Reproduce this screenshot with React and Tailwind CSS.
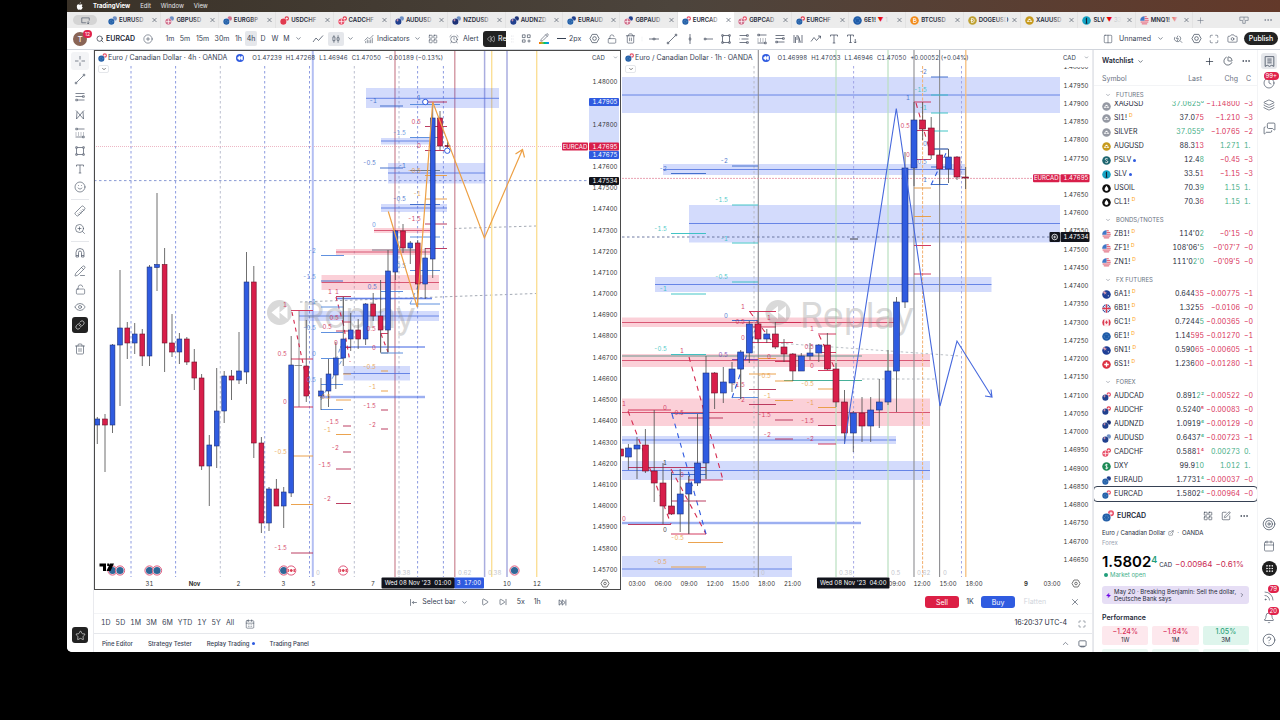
import React from 'react';
import {
  Search, CirclePlus, ChevronDown, ChevronUp, ChevronRight, LayoutGrid, AlarmClock, Pencil,
  LockOpen, Trash2, Smile, Ruler, ZoomIn, Magnet, PencilLine, Eye, Link, Star, Plus, ChartPie,
  Ellipsis, Layers, MessagesSquare, Target, Calendar, Grip, Rss, Bell, CircleHelp, Clock, Columns2,
  Maximize, Camera, Play, StepForward, SkipForward, X, CalendarDays, SquarePen, ExternalLink,
  Rewind, Zap, ChartNoAxesCombined, LayoutTemplate,
} from 'lucide-react';

const BLUE = '#2f5be0';
const RED = '#d81e4a';

/* ---------- flags ---------- */
const FLAG = {
  EUR: '#2560a8', USD: '#6d8fc4', GBP: '#d0708c', CHF: '#e03a4e', CAD: '#e8506a', AUD: '#21408e', NZD: '#1d3277',
};

function Pair({ a, b, className = 'size-[10px]' }) {
  return (
    <svg viewBox="0 0 20 20" className={`${className} shrink-0`} aria-hidden="true">
      <circle cx="15" cy="5.500" r="5" fill={FLAG[b]} />
      {(b === 'CAD' || b === 'CHF') && <path d="M15 3v5M12.500 5.500h5" stroke="#fff" strokeWidth="1.800" />}
      <circle cx="7.500" cy="12.500" r="7.500" fill="#fff" />
      <circle cx="7.500" cy="12.500" r="6.800" fill={FLAG[a]} />
      {(a === 'CAD' || a === 'USD' || a === 'GBP') && <path d="M2 12.500h11M7.500 7v11" stroke="#fff" strokeWidth="1.600" />}
      {(a === 'AUD' || a === 'NZD') && <path d="M3 9h5M5.500 7v5" stroke="#f3a6b4" strokeWidth="1.500" />}
      {a === 'EUR' && <circle cx="7.500" cy="12.500" r="3.200" fill="none" stroke="#86b6dc" strokeWidth="1.200" strokeDasharray="1.2 1.6" />}
    </svg>
  );
}

function Badge({ kind }) {
  const base = { viewBox: '0 0 20 20', className: 'size-[9px] shrink-0', 'aria-hidden': true };
  switch (kind) {
    case 'silver':
    case 'gold':
      return (
        <svg {...base}>
          <circle cx="10" cy="10" r="9.500" fill={kind === 'gold' ? '#c79a1c' : '#9599a3'} />
          <path d="M4 13l1.500-3h3L10 13zM10 13l1.500-3h3L16 13zM7 9l1.500-3h3L13 9z" fill="#fff" />
        </svg>
      );
    case 'pslv':
      return <svg {...base}><circle cx="10" cy="10" r="9.500" fill="#1f6670" /><path d="M13 7c-1-2-6-2-6 0s6 3 6 6-5 2-6 0" stroke="#fff" strokeWidth="1.800" fill="none" /></svg>;
    case 'slv':
      return <svg {...base}><circle cx="10" cy="10" r="9.500" fill="#15a3c4" /><path d="M10 4v12M8 16h4M8.500 8H10" stroke="#123" strokeWidth="2.400" /></svg>;
    case 'oil':
      return <svg {...base}><circle cx="10" cy="10" r="9.500" fill="#111" /><path d="M10 4c3 4 4 5.500 4 7.500a4 4 0 0 1-8 0C6 9.500 7 8 10 4z" fill="#fff" /></svg>;
    case 'us':
      return <svg {...base}><circle cx="10" cy="10" r="9.500" fill="#f4e6ea" /><path d="M10 1.500h5M10 5.500h8.500M10 9.500h9.500M1.500 13.500h17M4 17.500h12" stroke="#e2566c" strokeWidth="2" /><path d="M10 .5A9.500 9.500 0 0 0 .5 10.500H10z" fill="#3f78c8" /></svg>;
    case 'au':
    case 'nz':
      return <svg {...base}><circle cx="10" cy="10" r="9.500" fill="#1f3f96" /><path d="M2 6h8M6 2v8M2.500 3l7 6" stroke="#f2aab5" strokeWidth="1.600" /><circle cx="14" cy="13" r="1.300" fill="#fff" /></svg>;
    case 'gb':
      return <svg {...base}><circle cx="10" cy="10" r="9.500" fill="#3b5aa5" /><path d="M3 3l14 14M17 3L3 17" stroke="#fff" strokeWidth="2" /><path d="M10 .5v19M.5 10h19" stroke="#fff" strokeWidth="5" /><path d="M10 .5v19M.5 10h19" stroke="#dc3a50" strokeWidth="2.800" /></svg>;
    case 'ca':
      return <svg {...base}><circle cx="10" cy="10" r="9.500" fill="#fdeef0" /><path d="M5 2a9.500 9.500 0 0 0 0 16zM15 2a9.500 9.500 0 0 1 0 16z" fill="#dc3a50" /><path d="M10 5l3 5-3 4-3-4z" fill="#dc3a50" /></svg>;
    case 'eu':
      return <svg {...base}><circle cx="10" cy="10" r="9.500" fill="#1f5ba8" /><circle cx="10" cy="10" r="5" fill="none" stroke="#6fa6d8" strokeWidth="1.600" strokeDasharray="1.600 1.800" /></svg>;
    case 'ch':
      return <svg {...base}><circle cx="10" cy="10" r="9.500" fill="#dd3142" /><path d="M10 5v10M5 10h10" stroke="#fff" strokeWidth="3" /></svg>;
    case 'dxy':
      return <svg {...base}><circle cx="10" cy="10" r="9.500" fill="#1c8a55" /><path d="M13 7c-1-2-6-2-6 0s6 3 6 6-5 2-6 0M10 4v12" stroke="#fff" strokeWidth="1.600" fill="none" /></svg>;
    case 'btc':
      return <svg {...base}><circle cx="10" cy="10" r="9.500" fill="#f28c1c" /><path d="M7.500 5v10M7.500 5.500h3.500a2 2 0 0 1 0 4H7.500h4a2.500 2.500 0 0 1 0 5h-4" stroke="#fff" strokeWidth="1.700" fill="none" /></svg>;
    case 'doge':
      return <svg {...base}><circle cx="10" cy="10" r="9.500" fill="#bfa132" /><path d="M8 5v10M8 5.500h1.500a4.500 4.500 0 0 1 0 9H8M6 10h5" stroke="#fff" strokeWidth="1.700" fill="none" /></svg>;
    default:
      return null;
  }
}

/* ---------- drawing-tool glyphs ---------- */
const GLYPH = {
  cross: 'M12 2v7M12 15v7M2 12h7M15 12h7',
  trend: 'M5.500 18.500L18.500 5.500M2.500 18.500h3v3h-3zM18.500 2.500h3v3h-3z',
  fib: 'M3 5h14M7 12h14M3 12h1M3 19h14M17 3.500h3.500v3H17zM17 17.500h3.500v3H17z',
  fibExt: 'M3 5h18M3 11h14M7 18h14M17 9.500h3.500v3H17zM3.500 16.500H7v3H3.500z',
  pattern: 'M5 20L6 5l6 7 6-7 1 15-7-8zM6 5l-2-2M18 5l2-2',
  forecast: 'M7 4h14M3.500 2.500H7v3H3.500zM3 20h14M17 18.500h3.500v3H17zM3 12h2M8 12h2M13 12h2M18 12h2M3 16h2M8 16h2M13 16h2M18 16h2',
  rect: 'M6.500 5h11M6.500 19h11M5 6.500v11M19 6.500v11M3.500 3.500h3v3h-3zM17.500 3.500h3v3h-3zM3.500 17.500h3v3h-3zM17.500 17.500h3v3h-3z',
  hline: 'M2 12h8M14 12h8M10 10.500h4v3h-4z',
  vline: 'M12 2v8M12 14v8M10.500 10h3v4h-3z',
  hray: 'M8 12h14M4.500 10.500H8v3H4.500z',
  bars: 'M4 4v16M7 8v12M12 5l5 14M10 4v10M14 9v11M20 4v16',
  zigzag: 'M2 17l6-8 5 6 8-9M16 6h5v5',
  text: 'M5 7V4h14v3M12 4v16M9.500 20h5',
  textPin: 'M3 7V4h12v3M9 4v15M6.500 19h5M18.500 12v8M16 17.500l2.500 2.500 2.500-2.500',
  line: 'M2 18l6-8 5 5 9-10',
  candles: 'M7 3v4M7 16v5M4.500 7h5v9h-5zM17 3v6M17 15v6M14.500 9h5v6h-5z',
  handle: 'M10 5h1M14 5h1M10 12h1M14 12h1M10 19h1M14 19h1',
  gridPlus: 'M3 4h6v6H3zM14 4h6v6h-6zM3 15h6v5H3zM14 17.500h7M17.500 14v7',
  searchBolt: 'M4.500 7a7.500 7.500 0 1 0 11-2M17 16l5 5M12 4l-4 7h5l-3 6',
};

function Glyph({ name, className = 'size-[12px]' }) {
  return (
    <svg viewBox="0 0 24 24" className={className} fill="none" stroke="currentColor" strokeWidth="1.400" aria-hidden="true">
      <path d={GLYPH[name]} />
    </svg>
  );
}

function IconButton({ label, className = '', children }) {
  return (
    <button type="button" aria-label={label} className={`flex shrink-0 items-center justify-center ${className}`}>
      {children}
    </button>
  );
}

/* ---------- top bars ---------- */
function MenuBar() {
  return (
    <div className="flex h-3 items-center bg-linear-to-r from-[#3a3228] via-[#4c443c] to-[#63392a] pl-[9px] text-[6px] leading-3 text-gray-200">
      <svg viewBox="0 0 20 24" className="h-[8px] w-[8px]" aria-hidden="true">
        <path d="M13 1c0 2-2 4.500-4 4.500C9 3 11 1.200 13 1zM17.500 17c-1 3-3 6-5 6-1.500 0-2-.8-3.500-.8S7 23 5.500 23C3 23 .5 18 .5 13.500.5 9.500 3 7 5.500 7c1.500 0 2.500 1 4 1s2.500-1.200 4.500-1.200c1.300 0 2.800.8 3.700 2-3.200 2-2.700 6.500 0.800 7.800z" fill="#fff" />
      </svg>
      <span className="ml-[9px] font-bold text-white">TradingView</span>
      <span className="ml-[10px]">Edit</span>
      <span className="ml-[10px]">Window</span>
      <span className="ml-[10px]">View</span>
    </div>
  );
}

const TABS = [
  ['EURUSD', 'EUR', 'USD'], ['GBPUSD', 'GBP', 'USD'], ['EURGBP', 'EUR', 'GBP'], ['USDCHF', 'CHF', 'CHF'],
  ['CADCHF', 'CAD', 'CHF'], ['AUDUSD', 'AUD', 'USD'], ['NZDUSD', 'NZD', 'USD'], ['AUDNZD', 'AUD', 'NZD'],
  ['EURAUD', 'EUR', 'AUD'], ['GBPAUD', 'GBP', 'AUD'], ['EURCAD', 'EUR', 'CAD'], ['GBPCAD', 'GBP', 'CAD'],
  ['EURCHF', 'EUR', 'CHF'], ['6E1!', 'eu', null, '1'], ['BTCUSD', 'btc'], ['DOGEUSD', 'doge'],
  ['XAUUSD', 'gold'], ['SLV', 'slv', null, '33'], ['MNQ1!', 'us', null, ''],
];

function TabBar() {
  return (
    <div className="flex h-4 items-stretch bg-[#ececec]">
      <div className="flex w-[37px] shrink-0 items-center pl-[6px]">
        <IconButton label="Windows" className="h-[10px] w-[24px] rounded-full bg-[#d4d4d4] text-gray-600">
          <svg viewBox="0 0 24 24" className="size-[9px]" fill="none" stroke="currentColor" strokeWidth="1.800" aria-hidden="true">
            <path d="M13 18H2V5h20v7M19 14v7M16 18l3 3 3-3" />
          </svg>
        </IconButton>
      </div>
      <div className="flex min-w-0 flex-1">
        {TABS.map(([name, a, b, extra]) => {
          const active = name === 'EURCAD';
          return (
            <div
              key={name}
              className={`flex min-w-0 flex-1 items-center gap-[2px] pl-[4px] pr-[2px] ${active ? 'bg-white' : 'border-r border-[#e2e2e2]'}`}
            >
              {b ? <Pair a={a} b={b} className="size-[9px]" /> : <Badge kind={a} />}
              <div className="relative min-w-0 flex-1 whitespace-nowrap text-[6px] font-semibold leading-4 text-gray-800">
                {name}
                {extra !== undefined && <span className="font-normal text-gray-400"><span className="text-red-600"> ▼</span> {extra}</span>}
                <span className={`absolute inset-y-0 right-[2px] w-[12px] bg-linear-to-r from-transparent ${active ? 'to-white' : 'to-[#ececec]'}`} />
              </div>
              <IconButton label={`Close ${name}`} className="size-[7px] text-gray-700"><X className="size-[8px]" strokeWidth={2} /></IconButton>
            </div>
          );
        })}
      </div>
      <div className="flex w-[87px] shrink-0 items-center justify-between pl-[3px] pr-[7px] text-gray-500">
        <IconButton label="New tab" className="size-[9px]"><Plus className="size-[9px]" strokeWidth={1.5} /></IconButton>
        <div className="flex gap-[14px]">
          <IconButton label="Arrange" className="size-[10px]">
            <svg viewBox="0 0 24 20" className="h-[10px] w-[12px]" fill="none" stroke="currentColor" strokeWidth="1.600" aria-hidden="true"><path d="M2 3h20v8h-7v7H9v-7H2zM12 3v8" /></svg>
          </IconButton>
          <IconButton label="More" className="size-[10px]"><Ellipsis className="size-[10px]" strokeWidth={1.5} /></IconButton>
        </div>
      </div>
    </div>
  );
}

const INTERVALS = [
  ['1m', 'w-[14px]'], ['5m', 'w-[16px]'], ['15m', 'w-[19px]'], ['30m', 'w-[20px]'], ['1h', 'w-[13px]'],
  ['4h', 'w-[12px] rounded-[2px] bg-gray-200'], ['D', 'w-[12px]'], ['W', 'w-[12px]'], ['M', 'w-[11px]'],
];
const DRAW = [
  ['hline', 'Horizontal line'], ['trend', 'Trend line'], ['vline', 'Vertical line'], ['hray', 'Horizontal ray'],
  ['rect', 'Rectangle'], ['fib', 'Fib retracement'], ['forecast', 'Long position'], ['fibExt', 'Fib extension'],
  ['bars', 'Bars pattern'], ['zigzag', 'Path'], ['text', 'Text'], ['textPin', 'Anchored text'],
];

function Toolbar() {
  return (
    <div className="flex h-[21px] items-center bg-white text-[7px] leading-none text-gray-700">
      <div className="relative ml-[6px] flex size-[14px] shrink-0 items-center justify-center rounded-full bg-[#8a6556] text-[8px] text-white">
        T
        <span className="absolute -right-[5px] -top-[2px] rounded-full bg-[#e0224b] px-[2px] text-[5px] leading-[8px]">12</span>
      </div>
      <button type="button" className="ml-[9px] flex w-[44px] shrink-0 items-center gap-[2px] font-semibold text-gray-800">
        <Search className="size-[8px]" strokeWidth={2} />EURCAD
      </button>
      <IconButton label="Compare" className="w-[16px]"><CirclePlus className="size-[10px]" strokeWidth={1.3} /></IconButton>
      <div className="ml-[7px] flex shrink-0">
        {INTERVALS.map(([t, c]) => (
          <button key={t} type="button" className={`h-[15px] shrink-0 text-center ${c}`}>{t}</button>
        ))}
      </div>
      <IconButton label="More intervals" className="w-[12px]"><ChevronDown className="size-[7px]" /></IconButton>
      <IconButton label="Line chart" className="ml-[6px] w-[16px]"><Glyph name="line" /></IconButton>
      <IconButton label="Candles" className="ml-[2px] h-[14px] w-[16px] rounded-[2px] bg-gray-200"><Glyph name="candles" className="size-[10px]" /></IconButton>
      <IconButton label="Chart styles" className="w-[13px]"><ChevronDown className="size-[7px]" /></IconButton>
      <button type="button" className="ml-[7px] flex w-[48px] shrink-0 items-center gap-[3px]">
        <ChartNoAxesCombined className="size-[10px] shrink-0" strokeWidth={1.3} />Indicators
      </button>
      <IconButton label="Favorite indicators" className="w-[10px]"><ChevronDown className="size-[7px]" /></IconButton>
      <IconButton label="Templates" className="ml-[5px] w-[12px]"><LayoutGrid className="size-[10px]" strokeWidth={1.3} /></IconButton>
      <button type="button" className="ml-[10px] flex w-[34px] shrink-0 items-center gap-[4px]">
        <AlarmClock className="size-[10px] shrink-0" strokeWidth={1.3} />Alert
      </button>
      <button type="button" aria-label="Replay" className="flex h-[16px] w-[23px] shrink-0 items-center gap-[3px] rounded-l-[3px] bg-[#222] pl-[4px] text-white">
        <Rewind className="size-[8px] shrink-0" strokeWidth={1.5} />Re
      </button>
      <div className="flex shrink-0 items-center">
        <span className="flex w-[11px] justify-center text-gray-400"><Glyph name="handle" className="size-[10px]" /></span>
        <IconButton label="Drawing templates" className="w-[18px]"><Glyph name="gridPlus" className="size-[11px]" /></IconButton>
        <IconButton label="Line color" className="w-[18px] flex-col">
          <Pencil className="size-[9px]" strokeWidth={1.5} />
          <span className="h-[2px] w-[10px] bg-linear-to-r from-orange-500 via-green-500 to-blue-500" />
        </IconButton>
        <button type="button" className="flex w-[32px] items-center gap-[3px] pl-[4px]">
          <span className="h-px w-[9px] bg-gray-700" />2px
        </button>
        <IconButton label="Settings" className="w-[18px]"><SettingsHex /></IconButton>
        <IconButton label="Lock" className="w-[18px]"><LockOpen className="size-[10px]" strokeWidth={1.3} /></IconButton>
        <IconButton label="Remove" className="w-[18px]"><Trash2 className="size-[11px]" strokeWidth={1.3} /></IconButton>
        <span className="flex w-[6px] justify-center text-gray-400"><Glyph name="handle" className="size-[10px]" /></span>
        {DRAW.map(([g, label]) => (
          <IconButton key={label} label={label} className="w-[18px]"><Glyph name={g} /></IconButton>
        ))}
      </div>
      <div className="ml-auto flex shrink-0 items-center pr-[2px]">
        <button type="button" className="flex items-center gap-[6px]">
          <Columns2 className="size-[10px]" strokeWidth={1.3} />Unnamed
        </button>
        <IconButton label="Layouts" className="w-[18px]"><ChevronDown className="size-[7px]" /></IconButton>
        <IconButton label="Quick search" className="w-[18px]"><Glyph name="searchBolt" className="size-[10px]" /></IconButton>
        <IconButton label="Chart settings" className="w-[18px]"><SettingsHex /></IconButton>
        <IconButton label="Fullscreen" className="w-[18px]"><Maximize className="size-[10px]" strokeWidth={1.3} /></IconButton>
        <IconButton label="Snapshot" className="w-[19px]"><Camera className="size-[11px]" strokeWidth={1.3} /></IconButton>
        <button type="button" className="ml-[2px] h-[13px] w-[34px] rounded-full bg-[#222] text-center font-medium text-white">Publish</button>
      </div>
    </div>
  );
}

function SettingsHex() {
  return (
    <svg viewBox="0 0 24 24" className="size-[11px]" fill="none" stroke="currentColor" strokeWidth="1.500" aria-hidden="true">
      <path d="M7 3h10l5 9-5 9H7l-5-9z" strokeLinejoin="round" /><circle cx="12" cy="12" r="4" />
    </svg>
  );
}

const TOOLS_A = [['cross', 'Cross'], ['trend', 'Trend line'], ['fibExt', 'Fib'], ['pattern', 'Patterns'], ['forecast', 'Forecasting'], ['rect', 'Shapes'], ['text', 'Text']];

function LeftTools() {
  const cell = 'h-[18px] w-[18px]';
  const ic = 'size-[12px]';
  return (
    <div className="flex w-[26px] shrink-0 flex-col items-center bg-white pt-[2px] text-gray-600">
      {TOOLS_A.map(([g, label], i) => (
        <IconButton key={label} label={label} className={`${cell} ${i === 0 ? 'rounded-[3px] bg-gray-100' : ''}`}><Glyph name={g} /></IconButton>
      ))}
      <IconButton label="Icons" className={cell}><Smile className={ic} strokeWidth={1.3} /></IconButton>
      <span className="my-[2px] h-[2px] w-[18px] border-b border-gray-200" />
      <IconButton label="Measure" className={cell}><Ruler className={`${ic} rotate-90`} strokeWidth={1.3} /></IconButton>
      <IconButton label="Zoom in" className={cell}><ZoomIn className={ic} strokeWidth={1.3} /></IconButton>
      <span className="my-[2px] h-[2px] w-[18px] border-b border-gray-200" />
      <IconButton label="Magnet" className={cell}>
        <svg viewBox="0 0 24 24" className={ic} fill="none" stroke="currentColor" strokeWidth="1.400" aria-hidden="true"><path d="M4 20v-9a8 8 0 0 1 16 0v9h-5v-9a3 3 0 0 0-6 0v9zM4 17h5M15 17h5" /></svg>
      </IconButton>
      <IconButton label="Keep drawing" className={cell}><PencilLine className={ic} strokeWidth={1.3} /></IconButton>
      <IconButton label="Lock drawings" className={cell}><LockOpen className="size-[11px]" strokeWidth={1.3} /></IconButton>
      <IconButton label="Hide drawings" className={cell}><Eye className={ic} strokeWidth={1.3} /></IconButton>
      <IconButton label="Sync drawings" className="my-px size-[16px] rounded-[3px] bg-[#222] text-white"><Link className="size-[10px]" strokeWidth={1.5} /></IconButton>
      <IconButton label="Remove drawings" className={`mt-[6px] ${cell}`}><Trash2 className={ic} strokeWidth={1.3} /></IconButton>
      <IconButton label="Favorites" className="mb-[9px] mt-auto size-[16px] rounded-[3px] bg-[#222] text-white"><Star className="size-[11px]" strokeWidth={1.3} /></IconButton>
    </div>
  );
}

/* ---------- charts ---------- */
/* candle: [x, high, top, bottom, low, up] */
const C4H = [
  [97.3, 417, 419, 425, 444, 1], [105, 414, 419, 425, 472, 0], [112.5, 344, 345, 425, 433, 1], [120, 270, 328, 345, 406, 1],
  [127.3, 322, 328, 343, 359, 0], [134.7, 323, 334, 343, 354, 1], [142.3, 329, 334, 356, 366, 0], [149.5, 265, 267, 356, 366, 1],
  [157, 193, 264.5, 267.5, 291, 1], [164.6, 248, 264.5, 343, 372, 0], [172, 314, 343, 352, 357, 0], [179.4, 333, 339, 352, 364, 1],
  [186.8, 337, 339, 362, 365, 0], [194.3, 349, 362, 378, 390, 0], [201.6, 374, 378, 466, 470, 0], [209.3, 435, 445, 466, 506, 1],
  [216.7, 368, 411, 446, 468, 1], [224.2, 371, 376, 411, 423, 1], [231.5, 370, 376, 380, 400, 0], [239, 332, 371, 380, 384, 1],
  [246.5, 252, 282, 372, 384, 1], [253.8, 266, 282, 443, 458, 0], [261.4, 437, 443, 523, 533, 0], [269, 487, 489, 523, 531, 1],
  [276.4, 479, 489, 506, 506, 0], [283.7, 487, 492, 506, 528, 1], [291.2, 336, 365, 493, 497, 1], [306.3, 320, 366, 396, 402, 0],
  [321, 378, 391, 396, 410, 1], [328.5, 359, 374, 391, 407, 1], [335.8, 342, 358, 375, 389, 1], [343.3, 297, 339, 358, 366, 1],
  [350.7, 313, 330, 339, 351, 1], [358.2, 319, 330, 339, 349, 0], [365.6, 303, 304, 339, 345, 1], [373.2, 293, 304, 316, 321, 0],
  [380.6, 280, 316, 330, 352, 0], [388, 250, 271, 330, 352, 1], [395.4, 230, 231, 272, 280, 1], [403, 224, 231, 248, 253, 0],
  [410.3, 241, 243, 248, 264, 1], [417.7, 240, 243, 284, 307, 0], [425.2, 248, 258, 284, 299, 1], [432.7, 102, 118, 259, 278, 1],
  [440, 111, 118, 146, 150, 0], [447.5, 140, 145.5, 146.5, 153, 0],
];
const C1H = [
  [620.5, 446, 449, 456, 460, 0], [628.4, 444, 448, 457, 470, 1], [637, 437, 445, 449, 479, 1], [645.4, 429, 445, 471, 473, 0],
  [654.2, 410, 471, 483, 502, 0], [663, 463, 483, 506, 524, 0], [671.5, 472, 506, 514, 515, 0], [680.2, 469, 494, 514, 532, 1],
  [688.8, 476, 483, 494, 534, 1], [697.5, 414, 463, 483, 486, 1], [706, 356, 373, 463, 479, 1], [714.6, 372, 373, 393, 409, 0],
  [723.3, 367, 382, 393, 403, 1], [732, 362, 369, 383, 392, 1], [740.7, 350, 352, 369, 399, 1], [749.3, 321, 324, 353, 363, 1],
  [758, 312, 324, 339, 343, 0], [766.8, 329, 334, 339, 343, 1], [775.3, 322, 334, 347, 349, 0], [784, 339, 347, 354, 362, 0],
  [792.8, 353, 354, 371, 381, 0], [801.3, 353, 356, 371, 371, 1], [810, 343, 353, 356, 360, 1], [818.8, 344, 345, 353, 362, 1],
  [827.4, 333, 345, 369, 370, 0], [836, 363, 369, 402, 407, 0], [844.5, 390, 402, 433, 444, 0], [853.3, 411, 413, 433, 452, 1],
  [862, 397, 413, 426, 442, 0], [870.7, 397, 410, 426, 442, 1], [879.3, 379, 402, 410, 428, 1], [888, 350, 371, 402, 405, 1],
  [896.5, 297, 302, 371, 412, 1], [905, 152, 168, 302, 308, 1], [914, 102, 120, 168, 186, 1], [922.6, 102, 120, 129, 140, 0],
  [931.2, 117, 128, 155, 159, 0], [939.7, 150, 155, 169, 185, 0], [948.5, 149, 157, 169, 183, 1], [957, 156, 157, 177, 180, 0],
  [965.6, 167, 177, 178, 189, 0],
];

/* zone: [x1, x2, top, bottom, mid, pink] */
const Z4H = [
  [366, 499, 88, 108, 98.3], [381, 432, 138, 144.5, 141], [388, 485, 163, 183.5, 173], [381, 447, 204, 212, 208],
  [374, 430, 228, 233, 230.5, 1], [336, 430, 249, 255, 252, 1], [321.500, 439, 275, 290, 282.5, 1], [336, 432, 297, 300, 298.5],
  [299, 439, 311, 321, 316], [343.500, 410, 366, 380.5, 373.5], [320, 425, 395.5, 398.5, 397], [340, 425, 346, 348, 347],
];
const Z1H = [
  [622, 1060, 77, 113, 95], [663, 965, 164, 175, 169.5], [689, 1060, 205, 242.5, 223.5], [655, 991.5, 277, 292, 284.5],
  [622, 894, 317.5, 327, 322.5, 1], [622, 930, 354, 367, 360.5, 1], [622, 930, 398.5, 426, 412.5, 1], [622, 896, 436, 444, 440],
  [622, 930, 461, 480, 470.5], [622, 861, 521.5, 524.5, 523], [622, 792, 556, 577, 569],
];

const N = '#3565c8', O = '#e99a3c', M = '#b52a52', T = '#2fbfc0', G = '#6b7280', L = '#4f86dc', R = '#cf2850';
/* tick: [x1, x2, y, color] */
const T4H = [
  [380, 403, 106, N], [410, 440, 104.5, L], [425, 447, 102, M], [425, 447, 126.5, M], [425, 447, 150.5, M], [410, 440, 137.5, L],
  [380, 403, 168, N], [410, 440, 170.5, G], [425, 447, 175.5, O], [425, 447, 199, O], [410, 440, 204.5, N], [425, 447, 224, M],
  [410, 440, 237, L], [425, 447, 248.5, M], [372, 417, 250, G], [321, 344, 255.5, L], [321, 343, 281, N], [410, 440, 270.5, L],
  [381, 403, 291.5, L], [336, 351, 296.5, M], [410, 440, 304, L], [321, 343, 307, L], [291, 313, 310.5, R], [343, 351, 322, M],
  [321, 343, 332.5, L], [336, 351, 331, M], [291, 313, 359, R], [321, 343, 358.5, L], [381, 388, 333.5, R], [381, 403, 353, L],
  [343, 351, 347.5, M], [343, 351, 374, O], [381, 388, 371, O], [321, 343, 384.5, L], [381, 388, 391, O], [336, 351, 400, O],
  [321, 343, 409.5, L], [294, 313, 407, R], [381, 388, 410, M], [343, 351, 426, M], [381, 388, 429, M], [336, 351, 434.5, O],
  [343, 351, 452, M], [291, 313, 456, O], [336, 351, 469, M], [336, 351, 503.5, M], [291, 313, 504.5, O], [291, 313, 553, M],
];
const T1H = [
  [732, 758, 166, N], [671, 706, 173.5, N], [732, 758, 205, T], [671, 706, 233.5, T], [732, 758, 243, T], [732, 758, 282, T],
  [671, 706, 294, T], [749, 776, 311.5, R], [732, 758, 320.5, N], [749, 793, 342.5, R], [753, 776, 327, R], [818, 836, 334, R],
  [775, 801, 322.5, R], [671, 706, 354.5, T], [622, 862, 356, '#5f8f86'], [784, 862, 380.5, '#32a88f'], [732, 758, 359.5, '#7a3ab0'],
  [758, 776, 358.5, O], [749, 776, 374, O], [775, 793, 361.5, R], [818, 836, 352.5, R], [818, 836, 370.5, R], [775, 793, 381, O],
  [818, 836, 389, O], [749, 776, 389.5, M], [732, 758, 397.5, L], [775, 793, 400.5, O], [749, 776, 404.5, M], [818, 836, 407.5, O],
  [775, 793, 420, M], [818, 836, 425.5, M], [775, 793, 439, M], [818, 836, 444, R], [628, 671, 410, R], [671, 706, 413.5, N],
  [688, 723, 418, M], [628, 706, 467.5, M], [671, 706, 474.5, N], [688, 723, 480, R], [671, 706, 501, M], [628, 671, 524.5, M],
  [671, 706, 534, R], [688, 723, 542.5, O], [671, 706, 567, O], [931, 948, 77, N], [931, 948, 95, T], [914, 931, 102, R],
  [931, 948, 113, T], [916, 931, 130.5, R], [931, 948, 131, T], [931, 948, 149, N], [916, 931, 159.5, R], [931, 948, 167, N],
  [931, 948, 184.5, N], [914, 931, 188, O], [914, 931, 216.5, O], [914, 931, 245.5, R], [914, 931, 274, R],
];

/* label: [x (right edge), y, text, color] */
const L4H = [
  [377, 101, '-1', N], [421, 97.500, '1', N], [421, 121.500, '0.5', R], [406, 132.500, '-1.5', L], [421, 146, '0', R],
  [376, 163, '-0.5', N], [406, 166, '-1', N], [421, 170.500, '-0.5', O], [421, 194, '-1', O], [406, 199, '-0.5', N],
  [421, 219, '-1.5', R], [376, 225, '0', L], [316, 251, '-2', L], [316, 276.500, '-1.5', L], [332, 291.500, '1', R], [339, 291.500, '1', R],
  [377, 286.500, '0.5', N], [406, 265.500, '0.5', L], [316, 302, '-1', L], [287, 305, '1', R], [339, 317.500, '0.5', R], [332, 326.500, '0.5', R],
  [316, 328, '-0.5', L], [287, 354, '0.5', R], [316, 353.500, '0', L], [376, 329, '0.5', R], [376, 348, '0', R], [338, 343, '0', R],
  [316, 379.500, '0.5', L], [376, 367, '-0.5', O], [376, 386.500, '-1', O], [287, 402, '0', R], [331, 396.500, '-0.5', O], [376, 405.500, '-1.5', R],
  [339, 421.500, '-1.5', R], [376, 424.500, '-2', R], [331, 430, '-1', O], [339, 447.500, '-2', R], [287, 451.500, '-0.5', O], [331, 464.500, '-1.5', R],
  [331, 499, '-2', R], [287, 548, '-1.5', R],
];
const L1H = [
  [728, 161, '-2', N], [667, 169, '-2', N], [728, 200, '-1.5', T], [667, 229, '-1.5', T], [728, 239, '-1', T], [728, 277, '-0.5', T],
  [667, 289, '-1', T], [745, 306.500, '1', R], [728, 315.500, '0', N], [745, 322, '0.5', R], [745, 337.500, '0', R], [771, 317.500, '1', R],
  [814, 328.500, '1', R], [667, 349, '-0.5', T], [684, 350.500, '1', R], [728, 354.500, '0.5', '#7a3ab0'], [771, 357, '0', R],
  [814, 347, '0.5', R], [814, 365.500, '0', R], [771, 376, '-0.5', O], [745, 384.500, '-1.5', R], [814, 384, '-0.5', O],
  [771, 395.500, '-1', O], [745, 399.500, '-2', R], [814, 402.500, '-1', O], [771, 415, '-1.5', R], [814, 420.500, '-1.5', R], [771, 434.500, '-2', R],
  [814, 439, '-2', R], [667, 407.500, '0', R], [684, 412.500, '0.5', R], [667, 463, '1', '#222'], [684, 475, '0', R], [667, 529.500, '0', '#222'],
  [684, 537.500, '-0.5', O], [667, 561.500, '-0.5', O], [626, 404, '1', R], [626, 519, '0', R],
  [927, 72, '-2', N], [927, 90, '-1.5', T], [910, 97.500, '1', N], [927, 108, '-1', T], [910, 125.500, '0.5', R],
  [927, 144, '0', N], [910, 154.500, '0', R], [927, 162, '0.5', N], [927, 179.500, '1', N],
];

function Candles({ data, width }) {
  return data.map(([x, hi, top, bot, lo, up]) => (
    <g key={x}>
      <path d={`M${x} ${hi}V${lo}`} stroke="#4a4a4a" strokeWidth=".8" />
      <rect x={x - width / 2} y={top} width={width} height={bot - top} fill={up ? BLUE : RED} stroke={up ? '#1b2f78' : '#6d1028'} strokeWidth=".6" />
    </g>
  ));
}

function Zones({ data }) {
  return data.map(([x1, x2, y1, y2, mid, pink], i) => (
    <g key={i}>
      <rect x={x1} y={y1} width={x2 - x1} height={y2 - y1} fill={pink ? '#f0506e' : '#3f63f0'} opacity={pink ? 0.27 : 0.23} />
      <path d={`M${x1} ${mid}H${x2}`} stroke={pink ? '#d0375a' : '#4b6fe0'} strokeWidth=".8" />
    </g>
  ));
}

function Ticks({ data }) {
  return data.map(([x1, x2, y, c], i) => <path key={i} d={`M${x1} ${y}H${x2}`} stroke={c} strokeWidth="1" opacity=".9" />);
}

function Labels({ data }) {
  return data.map(([x, y, t, c], i) => (
    <text key={i} x={x} y={y + 2} textAnchor="end" fill={c} fontSize="6" opacity=".85">{t}</text>
  ));
}

function Tag({ x, y, w, h = 8, fill, children, anchor }) {
  return (
    <g>
      <rect x={x} y={y - h / 2} width={w} height={h} rx="1" fill={fill} />
      <text x={anchor ?? x + w / 2} y={y + 2} textAnchor="middle" fill="#fff" fontSize="6">{children}</text>
    </g>
  );
}

function Watermark({ x }) {
  return (
    <g fill="#8a8a8a" opacity=".32">
      <circle cx={x} cy="312.5" r="12.500" />
      <path d={`M${x} 306v13l-8-6.500zM${x + 8} 306v13l-8-6.500z`} fill="#fff" />
      <text x={x + 22} y="328" fontSize="36">Replay</text>
    </g>
  );
}

function EventDot({ x, ca }) {
  return (
    <g>
      <circle cx={x} cy="570.5" r="4.600" fill="#fff" stroke="#e0567a" strokeWidth="1" />
      {ca
        ? <path d={`M${x - 3} 569v3M${x + 3} 569v3M${x - 1.5} 570.5h3M${x} 569v3`} stroke="#dc3a50" strokeWidth="1.300" />
        : <circle cx={x} cy="570.5" r="3.600" fill="#2f6797" />}
    </g>
  );
}

function AxisGear({ x }) {
  return (
    <g fill="none" stroke="#555" strokeWidth=".8">
      <path d={`M${x - 2} 580h4l2 3.500-2 3.500h-4l-2-3.500z`} /><circle cx={x} cy="583.5" r="1.300" />
    </g>
  );
}

const price4 = [[81, '1.48000'], [124, '1.47800'], [166.5, '1.47600'], [187.5, '1.47500'], [208.7, '1.47400'], [230, '1.47300'],
  ...Array.from({ length: 16 }, (_, i) => [251.1 + i * 21.22, (1.472 - i * 0.001).toFixed(5)])];
const price1 = Array.from({ length: 28 }, (_, i) => [66.8 + i * 18.24, (1.48 - i * 0.0005).toFixed(5)]).filter(([, t]) => t !== '1.47700');

function Chart4h() {
  return (
    <svg viewBox="94 50 527 540" className="block h-auto w-full tabular-nums" fontFamily="Inter, 'Liberation Sans', sans-serif" role="img" aria-label="EURCAD 4h chart">
      <g strokeWidth=".9" strokeDasharray="2.500 2.500" fill="none">
        <path d="M131 66V577M175.600 66V577M264.700 66V577M309.500 66V577M417.600 66V577M443.400 66V577" stroke="#7f8edc" />
        <path d="M220.300 66V577M354.300 66V577M399 66V577" stroke="#b3b7c8" />
        <path d="M94 180.600H589" stroke="#7d8fcf" />
        <path d="M300 302L536 293.500M454 228.500L536 226" stroke="#9aa0ab" />
      </g>
      <path d="M94 146.500H562" stroke="#e8a5b6" strokeWidth=".8" strokeDasharray="1 1" />
      <path d="M312.800 50V577" stroke="#b4bff3" strokeWidth="2" />
      <path d="M484.600 50V577M507 50V577" stroke="#a9addf" strokeWidth="1.500" />
      <path d="M395 50V577M454.800 50V577" stroke="#cf8f9b" strokeWidth="1.300" />
      <path d="M491.700 50V577M536.700 50V577" stroke="#fbdf97" strokeWidth="1.400" />
      <Zones data={Z4H} />
      <Watermark x={279.5} />
      <g fill="none" strokeWidth=".8">
        <path d="M299 311V407M294.500 365.500H299M299 365.500h3M343.300 297V322M380.600 333V353H388V316" stroke="#777" />
        <path d="M292 312L310 396M336 297l7 26M343 322l7 40M381 334l7 18" stroke="#d42a4f" strokeDasharray="4 4" strokeWidth="1.100" />
        <path d="M321 400l22-42M336 360l7-20M410 304l8-18" stroke={L} strokeDasharray="4 4" />
      </g>
      <Ticks data={T4H} />
      <Candles data={C4H} width={4.8} />
      <Labels data={L4H} />
      <path d="M388.300 211.500L417.200 307L432.700 102L484.400 238L522.500 149.500M515.500 154l7-4.500 2 8" fill="none" stroke="#eda044" strokeWidth="1.200" />
      <g fill="#fff" stroke={BLUE} strokeWidth="1"><circle cx="425.300" cy="102" r="2.700" /><circle cx="447.300" cy="150.700" r="2.700" /></g>
      <g fontSize="6" fill="#c3c5cc"><text x="397" y="574.500">0.38</text><text x="458" y="574.500">0.62</text><text x="488" y="574.500">0.38</text><text x="316" y="574.500">0</text></g>
      <EventDot x={112.5} /><EventDot x={120} /><EventDot x={149.5} /><EventDot x={157} /><EventDot x={283.7} />
      <EventDot x={291.2} ca /><EventDot x={343.2} ca /><EventDot x={514.5} />
      <path d="M99.500 563.500h6.500v7.500h-3v-4.500h-3.500zM110 563.500h4l-3.500 7.500h-4zM107.200 563.500h2v2.500h-2z" fill="#000" />

      <rect x="589" y="102" width="30" height="53" fill="#d3dcfb" />
      <g fontSize="6" fill="#333" textAnchor="middle">
        {price4.map(([y, t]) => <text key={t} x="605" y={y + 2.500}>{t}</text>)}
      </g>
      <Tag x={589} y={102} w={30} fill={BLUE} anchor={605}>1.47905</Tag>
      <Tag x={589} y={155} w={30} fill={BLUE} anchor={605}>1.47675</Tag>
      <Tag x={562} y={146.5} w={26} fill={RED}>EURCAD</Tag>
      <Tag x={589} y={146.5} w={30} fill={RED} anchor={605}>1.47695</Tag>
      <Tag x={589} y={181} w={30} fill="#12141c" anchor={605}>1.47534</Tag>

      <g fontSize="6" fill="#333" textAnchor="middle">
        <text x="149.500" y="585.500">31</text><text x="194.500" y="585.500" fontWeight="700">Nov</text><text x="238.500" y="585.500">2</text>
        <text x="283.500" y="585.500">3</text><text x="313.500" y="585.500">5</text><text x="373" y="585.500">7</text>
        <text x="507" y="585.500">10</text><text x="537" y="585.500">12</text>
      </g>
      <Tag x={454} y={583} w={30} h={11} fill={BLUE}>3&#160; 17:00</Tag>
      <Tag x={381.5} y={583} w={73} h={11} fill="#12141c">Wed 08 Nov '23&#160; 01:00</Tag>
      <AxisGear x={605} />
    </svg>
  );
}

function Chart1h() {
  return (
    <svg viewBox="621 50 471 540" className="block h-auto w-full tabular-nums" fontFamily="Inter, 'Liberation Sans', sans-serif" role="img" aria-label="EURCAD 1h chart">
      <Zones data={Z1H} />
      <path d="M754 66V577" stroke="#b4b7c0" strokeDasharray="2.500 2.500" strokeWidth=".9" />
      <path d="M853.600 66V577M961.500 66V577" stroke="#9a9ee2" strokeDasharray="2.500 2.500" strokeWidth=".9" />
      <path d="M922.600 66V577" stroke="#f2b070" strokeDasharray="3 1.500" />
      <path d="M758.300 50V577M914 50V577M939.600 50V577" stroke="#8e8e92" strokeWidth="1.100" />
      <path d="M836 50V577M888 50V577" stroke="#b9dfc0" strokeWidth="1.200" />
      <path d="M965.800 50V577" stroke="#f6be7c" strokeWidth="1.300" />
      <path d="M622 178.400H1033" stroke="#e58a9f" strokeWidth=".8" strokeDasharray="2 1" />
      <path d="M622 237H1050" stroke="#5e6b97" strokeWidth=".9" strokeDasharray="2.500 2.500" />
      <path d="M776 343L960 356M862 379L935 379" stroke="#aab0b8" strokeWidth=".8" strokeDasharray="2.500 2.500" />
      <Watermark x={778} />
      <g fill="none" strokeWidth="1.100">
        <path d="M628 411L671 524M689 357L723 480M671 469L706 534M916 103l15 52M750 312l24 32M819 335l17 36" stroke="#d42a4f" strokeDasharray="5 5" />
        <path d="M672 414L706 534M732 398l26-76M931 185l17-36" stroke={BLUE} strokeDasharray="5 5" />
        <path d="M740.700 369V399M671.500 474V506M706 463V479M931 149H948.500V167M688.800 476V534" stroke="#777" strokeWidth=".8" />
      </g>
      <Ticks data={T1H} />
      <Candles data={C1H} width={6} />
      <Labels data={L1H} />
      <path d="M844.500 444L896.300 108.500L940 406L957 341L992 397M991 389.500l1 7.500-7-1" fill="none" stroke="#4668dd" strokeWidth="1.100" />
      <path d="M850 239h8" stroke="#333" strokeWidth=".9" />
      <g fontSize="6" fill="#c3c5cc"><text x="761" y="574.500">0</text><text x="839" y="574.500">0.38</text><text x="891" y="574.500">0.5</text><text x="917" y="574.500">0.62</text><text x="943" y="574.500">0</text></g>

      <g fontSize="6" fill="#333" textAnchor="middle">
        {price1.map(([y, t]) => <text key={t} x="1076" y={y + 2.500}>{t}</text>)}
        <text x="637" y="585.500">03:00</text><text x="663" y="585.500">06:00</text><text x="689" y="585.500">09:00</text><text x="715" y="585.500">12:00</text>
        <text x="740.500" y="585.500">15:00</text><text x="766.500" y="585.500">18:00</text><text x="792.500" y="585.500">21:00</text><text x="897" y="585.500">09:00</text>
        <text x="922" y="585.500">12:00</text><text x="948" y="585.500">15:00</text><text x="974" y="585.500">18:00</text>
        <text x="1026" y="585.500" fontWeight="700">9</text><text x="1052" y="585.500">03:00</text>
      </g>
      <rect x="1062" y="62" width="30" height="5" fill="#fff" />
      <Tag x={1033} y={178.3} w={26.5} fill={RED}>EURCAD</Tag>
      <Tag x={1060.5} y={178.3} w={29} fill={RED} anchor={1076}>1.47695</Tag>
      <Tag x={1060.5} y={237} w={29} h={10} fill="#12141c" anchor={1076}>1.47534</Tag>
      <rect x="1049.500" y="232" width="10.500" height="10" rx="1" fill="#12141c" />
      <circle cx="1054.700" cy="237" r="2.800" fill="none" stroke="#fff" strokeWidth=".8" /><path d="M1053.200 237h3M1054.700 235.500v3" stroke="#fff" strokeWidth=".7" />
      <Tag x={817} y={583} w={72.5} h={11} fill="#12141c">Wed 08 Nov '23&#160; 04:00</Tag>
      <AxisGear x={1076} />
    </svg>
  );
}

function Pane({ title, ohlc, active, children }) {
  return (
    <section className={`relative min-w-0 overflow-hidden bg-white ${active ? 'outline outline-1 -outline-offset-1 outline-[#4a4a4a]' : ''}`}>
      {children}
      <div className="absolute left-0 right-0 top-[2px] flex items-center pl-[4px] text-gray-700">
        <Pair a="EUR" b="CAD" className="size-[9px]" />
        <h2 className="ml-px whitespace-nowrap text-[7px] leading-[11px]">{title}</h2>
        <span className="ml-[9px] flex size-[8px] shrink-0 items-center justify-center rounded-full bg-[#2f5be0] text-white">
          <Rewind className="size-[6px] fill-white" />
        </span>
        <p className="ml-[8px] flex gap-[4px] whitespace-nowrap text-[6px] tabular-nums leading-[11px]">
          {ohlc.map((t) => <span key={t}>{t}</span>)}
        </p>
        <button type="button" className="ml-auto mr-[2px] flex h-[9px] w-[28px] items-center justify-between bg-white px-px text-[6px]">
          CAD<ChevronDown className="size-[5px]" />
        </button>
      </div>
      <button type="button" aria-label="Hide indicators" className="absolute left-[4px] top-[15px] flex h-[8px] w-[11px] items-center justify-center rounded-[2px] border border-gray-200 bg-white">
        <ChevronDown className="size-[6px]" />
      </button>
    </section>
  );
}

function ReplayBar() {
  return (
    <div className="grid h-[23px] grid-cols-[3fr_auto_5fr] items-center bg-white pt-px text-[7px] text-gray-700">
      <div />
      <div className="flex items-center">
        <button type="button" className="flex items-center gap-[4px]">
          <svg viewBox="0 0 24 24" className="size-[9px]" fill="none" stroke="currentColor" strokeWidth="1.600" aria-hidden="true"><path d="M4 3v18M21 12H9M13 8l-4 4 4 4" /></svg>
          Select bar
        </button>
        <IconButton label="Select options" className="ml-[4px] w-[9px]"><ChevronDown className="size-[7px]" /></IconButton>
        <IconButton label="Play" className="ml-[12px] w-[9px]"><Play className="size-[8px]" strokeWidth={1.8} /></IconButton>
        <IconButton label="Step forward" className="ml-[9px] w-[9px]"><SkipForward className="size-[8px]" strokeWidth={1.8} /></IconButton>
        <button type="button" className="ml-[9px]">5x</button>
        <button type="button" className="ml-[9px]">1h</button>
        <IconButton label="Jump to real time" className="ml-[17px] w-[9px]">
          <svg viewBox="0 0 24 24" className="size-[9px]" fill="none" stroke="currentColor" strokeWidth="1.800" aria-hidden="true"><path d="M3 5l8 7-8 7zM11 5l8 7-8 7zM21 4v16" /></svg>
        </IconButton>
      </div>
      <div className="flex items-center justify-end pr-[12px]">
        <button type="button" className="h-[12px] w-[34px] rounded-[3px] bg-[#dc1f45] leading-none text-white">Sell</button>
        <span className="w-[22px] text-center">1K</span>
        <button type="button" className="h-[12px] w-[34px] rounded-[3px] bg-[#2f5be0] leading-none text-white">Buy</button>
        <button type="button" disabled className="w-[40px] text-center text-gray-300">Flatten</button>
        <IconButton label="Close replay" className="ml-[15px] w-[10px]"><X className="size-[12px]" strokeWidth={1.5} /></IconButton>
      </div>
    </div>
  );
}

function RangeBar() {
  return (
    <div className="flex h-[20px] items-center gap-[5px] border-t border-gray-100 bg-white pl-[7px] text-[7px] text-gray-700">
      {['1D', '5D', '1M', '3M', '6M', 'YTD', '1Y', '5Y', 'All'].map((r) => <button key={r} type="button" className="tabular-nums">{r}</button>)}
      <IconButton label="Go to date" className="ml-[6px]"><CalendarDays className="size-[10px]" strokeWidth={1.3} /></IconButton>
      <span className="ml-auto mr-[6px] text-gray-800">16:20:37 UTC-4</span>
      <IconButton label="Expand" className="mr-[6px]"><Maximize className="size-[8px]" strokeWidth={1.4} /></IconButton>
    </div>
  );
}

function PanelTabs() {
  return (
    <div className="flex h-[19px] items-center gap-[15px] border-t border-gray-200 bg-white pl-[8px] text-[6px] font-medium text-gray-700">
      <button type="button">Pine Editor</button>
      <button type="button">Strategy Tester</button>
      <button type="button" className="flex items-center gap-[2px]">Replay Trading<span className="size-[3px] rounded-full bg-[#2f5be0]" /></button>
      <button type="button">Trading Panel</button>
      <div className="ml-auto flex gap-[8px] pr-[5px]">
        <IconButton label="Open panel"><ChevronUp className="size-[9px]" strokeWidth={1.5} /></IconButton>
        <IconButton label="Maximize panel"><svg viewBox="0 0 20 20" className="size-[9px]" fill="none" stroke="currentColor" strokeWidth="1.500" aria-hidden="true"><rect x="2" y="4" width="16" height="12" rx="2" /><path d="M6 16v1.500h8V16" /></svg></IconButton>
      </div>
    </div>
  );
}

/* ---------- watchlist ---------- */
/* [icon, symbol, last head, last tail, tail up, change, chg up, pct, marker] */
const ROWS = [
  ['silver', 'XAGUSD', '', '37.0625⁰', 1, '−1.14800', 0, '−3'],
  ['silver', 'SI1!', '37.0', '75', 0, '−1.210', 0, '−3', 'D'],
  ['silver', 'SILVER', '', '37.055⁰', 1, '−1.0765', 0, '−2'],
  ['gold', 'AUGUSD', '88.3', '13', 0, '1.271', 1, '1.'],
  ['pslv', 'PSLV', '12.4', '8', 1, '−0.45', 0, '−3', 'dot'],
  ['slv', 'SLV', '33.5', '1', 0, '−1.15', 0, '−3', 'dot'],
  ['oil', 'USOIL', '70.3', '9', 1, '1.15', 1, '1.'],
  ['oil', 'CL1!', '70.3', '6', 0, '1.15', 1, '1.', 'D'],
  'BONDS/TNOTES',
  ['us', 'ZB1!', "114'0", '2', 1, "−0'15", 0, '−0', 'D'],
  ['us', 'ZF1!', "108'06'", '5', 1, "−0'07'7", 0, '−0', 'D'],
  ['us', 'ZN1!', "111'0", "2'0", 1, "−0'09'5", 0, '−0', 'D'],
  'FX FUTURES',
  ['au', '6A1!', '0.644', '35', 0, '−0.00775', 0, '−1', 'D'],
  ['gb', '6B1!', '1.325', '5', 0, '−0.0106', 0, '−0', 'D'],
  ['ca', '6C1!', '0.7244', '5', 1, '−0.00365', 0, '−0', 'D'],
  ['eu', '6E1!', '1.14', '595', 0, '−0.01270', 0, '−1', 'D'],
  ['nz', '6N1!', '0.590', '65', 0, '−0.00605', 0, '−1', 'D'],
  ['ch', '6S1!', '1.236', '00', 0, '−0.01280', 0, '−1', 'D'],
  'FOREX',
  ['AUD/CAD', 'AUDCAD', '0.891', '2²', 1, '−0.00522', 0, '−0'],
  ['AUD/CHF', 'AUDCHF', '0.5240', '⁸', 0, '−0.00083', 0, '−0'],
  ['AUD/NZD', 'AUDNZD', '1.0919', '⁶', 1, '−0.00129', 0, '−0'],
  ['AUD/USD', 'AUDUSD', '0.6437', '⁶', 1, '−0.00723', 0, '−1'],
  ['CAD/CHF', 'CADCHF', '0.588', '1⁴', 0, '0.00273', 1, '0.'],
  ['dxy', 'DXY', '99.9', '10', 1, '1.012', 1, '1.'],
  ['EUR/AUD', 'EURAUD', '1.7731', '⁴', 1, '−0.00037', 0, '−0'],
  ['EUR/CAD', 'EURCAD', '1.5802', '⁴', 1, '−0.00964', 0, '−0'],
];

const tone = (up) => (up ? 'text-[#3fae85]' : 'text-[#d8325a]');

function GroupRow({ name, first }) {
  return (
    <tr>
      <th colSpan={4} scope="colgroup" className="p-0 text-left font-normal">
        <div className={`flex items-center gap-[5px] pl-[11px] text-[6px] leading-[8px] text-gray-500 ${first ? 'h-[15px] pt-[2px]' : 'h-[18px] pt-[4px]'}`}>
          <ChevronDown className="size-[6px]" />{name}
        </div>
      </th>
    </tr>
  );
}

function Row({ row, cut }) {
  const [icon, sym, head, tail, tailUp, chg, chgUp, pct, mark] = row;
  const box = cut ? 'h-[10px] items-end overflow-hidden' : 'h-[14px] items-center';
  const selected = sym === 'EURCAD';
  return (
    <tr className={selected ? 'rounded-[3px] outline outline-1 outline-gray-700' : ''}>
      <td className="p-0">
        <div className={`flex gap-[3px] pl-[8px] leading-[14px] ${box}`}>
          {icon.includes('/') ? <Pair a={icon.split('/')[0]} b={icon.split('/')[1]} className="size-[9px]" /> : <Badge kind={icon} />}
          <span className="whitespace-nowrap">{sym}</span>
          {mark === 'D' && <sup className="top-0 -ml-px self-start text-[5px] leading-[9px] text-amber-500">D</sup>}
          {mark === 'dot' && <span className="-ml-px size-[3px] rounded-full bg-[#2f5be0]" />}
        </div>
      </td>
      <td className="p-0"><div className={`flex justify-end leading-[14px] ${box}`}>{head}<span className={tone(tailUp)}>{tail}</span></div></td>
      <td className={`p-0 ${tone(chgUp)}`}><div className={`flex justify-end leading-[14px] ${box}`}>{chg}</div></td>
      <td className={`p-0 ${tone(chgUp)}`}><div className={`flex pl-[4px] leading-[14px] ${box}`}>{pct}</div></td>
    </tr>
  );
}

function Sidebar() {
  return (
    <aside className="flex w-[164px] shrink-0 flex-col overflow-hidden border-l border-gray-200 bg-white text-[7px] text-gray-800">
      <div className="flex h-[22px] items-center pl-[8px] pr-[6px]">
        <button type="button" className="flex items-center gap-[3px] font-semibold">Watchlist<ChevronDown className="size-[7px]" /></button>
        <div className="ml-auto flex items-center gap-[8px]">
          <IconButton label="Add symbol"><Plus className="size-[11px]" strokeWidth={1.5} /></IconButton>
          <IconButton label="Advanced view"><ChartPie className="size-[10px]" strokeWidth={1.5} /></IconButton>
          <IconButton label="More"><Ellipsis className="size-[10px]" strokeWidth={1.6} /></IconButton>
        </div>
      </div>
      <table className="w-full table-fixed border-separate border-spacing-0 tabular-nums">
        <colgroup><col /><col className="w-[44px]" /><col className="w-[36px]" /><col className="w-[17px]" /></colgroup>
        <thead>
          <tr className="text-gray-500">
            <th className="h-[14px] border-b border-gray-100 p-0 pl-[8px] text-left font-normal leading-[13px]">Symbol</th>
            <th className="h-[14px] border-b border-gray-100 p-0 pr-[2px] text-right font-normal leading-[13px]">Last</th>
            <th className="h-[14px] border-b border-gray-100 p-0 pr-[2px] text-right font-normal leading-[13px]">Chg</th>
            <th className="h-[14px] border-b border-gray-100 p-0 pl-[6px] text-left font-normal leading-[13px]">C</th>
          </tr>
        </thead>
        <tbody>
          <GroupRow name="FUTURES" first />
          {ROWS.map((r, i) => (typeof r === 'string' ? <GroupRow key={r} name={r} /> : <Row key={r[1]} row={r} cut={i === 0} />))}
        </tbody>
      </table>
      <div className="px-[8px]">
        <div className="flex h-[28px] items-center pt-[2px]">
          <Pair a="EUR" b="CAD" className="size-[12px]" />
          <h2 className="ml-[3px] text-[7px] font-semibold">EURCAD</h2>
          <div className="ml-auto flex items-center gap-[8px]">
            <IconButton label="Details"><LayoutGrid className="size-[10px]" strokeWidth={1.3} /></IconButton>
            <IconButton label="Notes"><SquarePen className="size-[10px]" strokeWidth={1.3} /></IconButton>
            <IconButton label="More details"><Ellipsis className="size-[10px]" strokeWidth={1.6} /></IconButton>
          </div>
        </div>
        <p className="flex items-center gap-[3px] whitespace-nowrap text-[6px] leading-[7px]">
          Euro / Canadian Dollar<ExternalLink className="size-[6px]" strokeWidth={1.5} /> · <span>OANDA</span>
        </p>
        <p className="mt-[3px] text-[6px] leading-[7px] text-gray-400">Forex</p>
        <div className="mt-[8px] flex h-[16px] items-baseline whitespace-nowrap leading-[16px]">
          <span className="text-[15px] font-semibold text-black">1.5802</span>
          <span className="self-start text-[9px] font-semibold leading-[11px] text-[#1f9d7a]">4</span>
          <span className="ml-[2px] text-[6px]">CAD</span>
          <span className="ml-[3px] flex gap-[3px] text-[8px] text-[#c92a52]"><span>−0.00964</span><span>−0.61%</span></span>
        </div>
        <p className="mt-px flex items-center gap-[2px] pl-[2px] text-[6px] leading-[8px] text-[#45b08c]"><span className="size-[4px] rounded-full bg-[#1f9d7a]" />Market open</p>
        <a href="#news" className="mt-[7px] flex h-[18px] items-center gap-[3px] rounded-[3px] bg-[#e6def5] px-[4px] text-[6px] leading-[7px]">
          <Zap className="size-[5px] shrink-0 fill-violet-700 text-violet-700" />
          <span className="flex-1 whitespace-nowrap">May 20 · Breaking Benjamin: Sell the dollar,<br />Deutsche Bank says</span>
          <ChevronRight className="size-[6px] shrink-0" />
        </a>
        <h3 className="mt-[9px] text-[7px] font-semibold leading-[10px]">Performance</h3>
        <div className="mt-[3px] grid grid-cols-3 gap-[4px] text-center text-[6px] leading-[8px]">
          <div className="h-[19px] rounded-[2px] bg-[#fde8ed] pt-[2px]"><p className="text-[7px] font-medium text-[#d8325a]">−1.24%</p><p>1W</p></div>
          <div className="h-[19px] rounded-[2px] bg-[#fde8ed] pt-[2px]"><p className="text-[7px] font-medium text-[#d8325a]">−1.64%</p><p>1M</p></div>
          <div className="h-[19px] rounded-[2px] bg-[#def5ec] pt-[2px]"><p className="text-[7px] font-medium text-[#2ea37c]">1.05%</p><p>3M</p></div>
          <div className="h-[3px] rounded-t-[2px] bg-[#eaf8f2]" />
          <div className="h-[3px] rounded-t-[2px] bg-[#eaf8f2]" />
          <div className="h-[3px] rounded-t-[2px] bg-[#eaf8f2]" />
        </div>
      </div>
    </aside>
  );
}

function RailBadge({ children }) {
  return <span className="absolute -right-[3px] -top-[4px] rounded-full bg-[#e0224b] px-[2px] text-[6px] leading-[8px] text-white">{children}</span>;
}

function Rail() {
  const s = 'size-[14px]';
  return (
    <nav className="flex w-[23px] shrink-0 flex-col items-center border-l border-gray-100 bg-white pt-[3px] text-gray-600">
      <IconButton label="Watchlist" className="size-[16px] rounded-[3px] bg-gray-200">
        <svg viewBox="0 0 24 24" className="size-[13px]" fill="none" stroke="currentColor" strokeWidth="1.600" aria-hidden="true"><path d="M4 3h16v18l-4-2-4 2-4-2-4 2zM8 7.500h8M8 11h8M8 14.500h8" /></svg>
      </IconButton>
      <IconButton label="Alerts" className={`relative mt-[7px] ${s}`}><Clock className="size-[12px]" strokeWidth={1.4} /><RailBadge>99+</RailBadge></IconButton>
      <IconButton label="Object tree" className={`mt-[8px] ${s}`}><Layers className="size-[12px]" strokeWidth={1.4} /></IconButton>
      <IconButton label="Chats" className={`mt-[9px] ${s}`}><MessagesSquare className="size-[13px] -scale-x-100" strokeWidth={1.4} /></IconButton>
      <div className="mb-[5px] mt-auto flex flex-col items-center gap-[8px]">
        <IconButton label="Screener" className={s}><Target className="size-[14px]" strokeWidth={1.3} /></IconButton>
        <IconButton label="Calendar" className={s}><Calendar className="size-[12px]" strokeWidth={1.3} /></IconButton>
        <IconButton label="Products" className="size-[15px] rounded-full bg-[#1d1d1d] text-white"><Grip className="size-[9px]" strokeWidth={2} /></IconButton>
        <IconButton label="Streams" className={`relative mt-[5px] ${s}`}><Rss className="size-[12px]" strokeWidth={1.4} /><RailBadge>79</RailBadge></IconButton>
        <IconButton label="Notifications" className={`relative ${s}`}><Bell className="size-[12px]" strokeWidth={1.4} /><RailBadge>20</RailBadge></IconButton>
        <IconButton label="Help" className={s}><CircleHelp className="size-[14px]" strokeWidth={1.3} /></IconButton>
      </div>
    </nav>
  );
}

export default function App() {
  return (
    <div className="min-h-screen bg-black pl-[67px] font-['Inter','Liberation_Sans',sans-serif]">
      <div className="flex flex-col overflow-hidden rounded-bl-[5px]">
        <MenuBar />
        <TabBar />
        <Toolbar />
        <div className="flex border-t border-gray-300 bg-[#e9eaee]">
          <LeftTools />
          <main className="flex min-w-0 flex-1 flex-col px-px">
            <div className="grid grid-cols-[527fr_471fr]">
              <Pane active title="Euro / Canadian Dollar · 4h · OANDA" ohlc={['O1.47239', 'H1.47268', 'L1.46946', 'C1.47050', '−0.00189 (−0.13%)']}>
                <Chart4h />
              </Pane>
              <Pane title="Euro / Canadian Dollar · 1h · OANDA" ohlc={['O1.46998', 'H1.47053', 'L1.46946', 'C1.47050', '+0.00052 (+0.04%)']}>
                <Chart1h />
              </Pane>
            </div>
            <ReplayBar />
            <RangeBar />
            <PanelTabs />
          </main>
          <Sidebar />
          <Rail />
        </div>
      </div>
    </div>
  );
}
